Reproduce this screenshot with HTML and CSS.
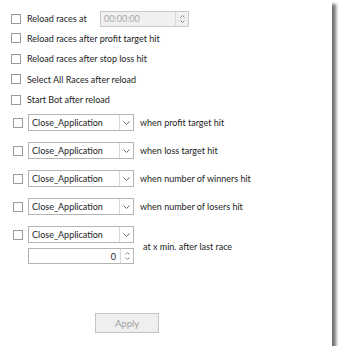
FILE: index.html
```html
<!DOCTYPE html>
<html lang="en">
<head>
  <meta charset="UTF-8" />
  <title>Reload settings</title>
  <link rel="stylesheet" href="styles.css">
</head>
<body>
  <div class="panel">
    <div class="opt opt-first">
      <span class="cb"></span>
      <span class="lbl lbl-fixed">Reload races at</span>
      <div class="spin time disabled">
        <span class="spin-val">00:00:00</span>
        <span class="arrows">
          <svg width="5" height="3" viewBox="0 0 5 3"><polyline points="0.5,2.5 2.5,0.5 4.5,2.5" /></svg>
          <svg width="5" height="3" viewBox="0 0 5 3"><polyline points="0.5,0.5 2.5,2.5 4.5,0.5" /></svg>
        </span>
      </div>
    </div>
    <div class="opt"><span class="cb"></span><span class="lbl">Reload races after profit target hit</span></div>
    <div class="opt"><span class="cb"></span><span class="lbl">Reload races after stop loss hit</span></div>
    <div class="opt"><span class="cb"></span><span class="lbl">Select All Races after reload</span></div>
    <div class="opt"><span class="cb"></span><span class="lbl">Start Bot after reload</span></div>

    <div class="actions">
      <div class="act">
        <span class="cb"></span>
        <div class="combo"><span class="combo-val">Close_Application</span><span class="drop"><svg width="7" height="4" viewBox="0 0 7 4"><polyline points="0.5,0.5 3.5,3.5 6.5,0.5" /></svg></span></div>
        <span class="lbl">when profit target hit</span>
      </div>
      <div class="act">
        <span class="cb"></span>
        <div class="combo"><span class="combo-val">Close_Application</span><span class="drop"><svg width="7" height="4" viewBox="0 0 7 4"><polyline points="0.5,0.5 3.5,3.5 6.5,0.5" /></svg></span></div>
        <span class="lbl">when loss target hit</span>
      </div>
      <div class="act">
        <span class="cb"></span>
        <div class="combo"><span class="combo-val">Close_Application</span><span class="drop"><svg width="7" height="4" viewBox="0 0 7 4"><polyline points="0.5,0.5 3.5,3.5 6.5,0.5" /></svg></span></div>
        <span class="lbl">when number of winners hit</span>
      </div>
      <div class="act">
        <span class="cb"></span>
        <div class="combo"><span class="combo-val">Close_Application</span><span class="drop"><svg width="7" height="4" viewBox="0 0 7 4"><polyline points="0.5,0.5 3.5,3.5 6.5,0.5" /></svg></span></div>
        <span class="lbl">when number of losers hit</span>
      </div>
      <div class="act">
        <span class="cb"></span>
        <div class="combo"><span class="combo-val">Close_Application</span><span class="drop"><svg width="7" height="4" viewBox="0 0 7 4"><polyline points="0.5,0.5 3.5,3.5 6.5,0.5" /></svg></span></div>
        <span></span>
      </div>
      <div class="act">
        <span></span>
        <div class="spin num">
          <span class="spin-val">0</span>
          <span class="arrows">
            <svg width="5" height="3" viewBox="0 0 5 3"><polyline points="0.5,2.5 2.5,0.5 4.5,2.5" /></svg>
            <svg width="5" height="3" viewBox="0 0 5 3"><polyline points="0.5,0.5 2.5,2.5 4.5,0.5" /></svg>
          </span>
        </div>
        <span class="lbl lbl-after">at x min. after last race</span>
      </div>
    </div>

    <div class="footer">
      <button class="apply" disabled>Apply</button>
    </div>
  </div>
</body>
</html>
```

FILE: styles.css
```css
body {
  margin: 0;
  background-color: #fff;
  font-family: Lato, 'Segoe UI', sans-serif;
  font-size: 9px;
  color: #1c1c1c;
}
svg polyline {
  fill: none;
  stroke: currentColor;
  stroke-width: 1;
}
.panel {
  width: 332px;
  height: 346px;
  box-sizing: border-box;
  background-color: #fff;
  box-shadow: 4px 4px 3px rgba(0,0,0,0.55);
  padding: 11px 0 0 11px;
  display: flex;
  flex-direction: column;
}
.cb {
  width: 8px;
  height: 8px;
  border: 1px solid #9a9a9a;
  background-color: #fff;
  flex: none;
}
.opt {
  display: flex;
  align-items: center;
  height: 20.5px;
}
.opt-first {
  height: 15px;
  margin-bottom: 2px;
}
.lbl {
  margin-left: 6px;
  white-space: nowrap;
}
.lbl-fixed {
  width: 73px;
}
.spin {
  display: flex;
  align-items: center;
  border: 1px solid #b4b4b4;
  box-sizing: border-box;
  height: 16px;
}
.spin-val {
  flex: 1;
  padding: 0 3px;
}
.time {
  width: 89px;
}
.disabled {
  background-color: #f0f0f0;
  border-color: #c8c8c8;
  color: #a8a8a8;
}
.arrows {
  width: 12px;
  height: 100%;
  border-left: 1px solid #d8d8d8;
  display: flex;
  flex-direction: column;
  align-items: center;
  justify-content: center;
  gap: 2px;
  color: #8a8a8a;
}
.arrows svg {
  display: block;
}
.actions {
  margin-top: 4px;
  margin-left: 2px;
  display: grid;
  grid-template-columns: 10px 106px auto;
  column-gap: 5px;
  row-gap: 11px;
  align-items: center;
}
.act {
  display: contents;
}
.combo {
  display: flex;
  align-items: center;
  height: 17px;
  box-sizing: border-box;
  border: 1px solid #b4b4b4;
  background-color: #fff;
}
.combo-val {
  flex: 1;
  padding-left: 3px;
  white-space: nowrap;
}
.drop {
  width: 13px;
  height: 100%;
  border-left: 1px solid #d8d8d8;
  display: flex;
  align-items: center;
  justify-content: center;
  color: #6a6a6a;
}
.act .lbl {
  margin-left: 1px;
}
.num {
  margin-top: -6px;
  background-color: #fff;
}
.num .spin-val {
  text-align: right;
  padding-right: 4px;
}
.act .lbl-after {
  align-self: start;
  margin-top: -13px;
  margin-left: 4px;
}
.footer {
  margin-top: auto;
  margin-bottom: 13px;
  padding-left: 84px;
}
.apply {
  width: 64px;
  height: 20px;
  font-family: Lato, 'Segoe UI', sans-serif;
  font-size: 9.5px;
  color: #a0a0a0;
  background-color: #efefef;
  border: 1px solid #c4c4c4;
  padding: 0;
}
```
